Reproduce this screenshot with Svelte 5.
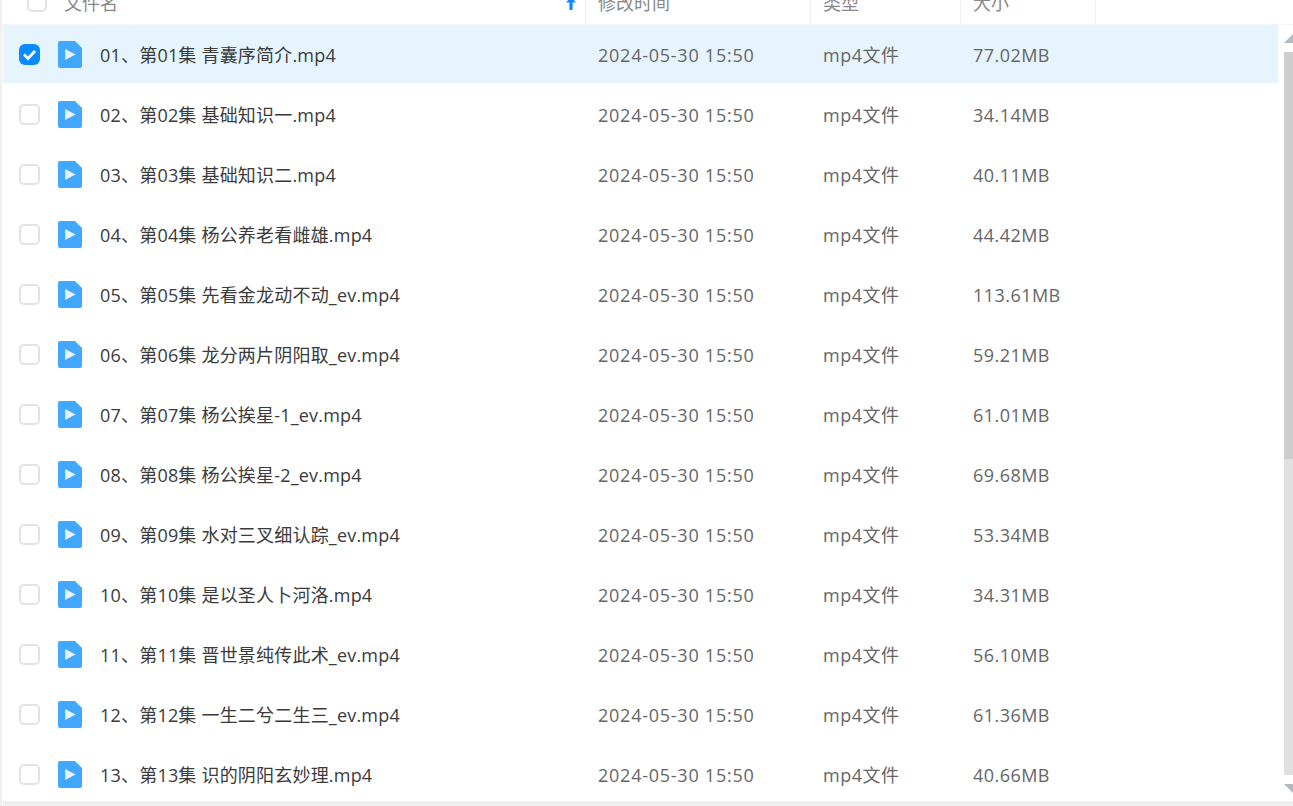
<script>
	const files = [
		["01、第01集 青囊序简介.mp4", "77.02MB"],
		["02、第02集 基础知识一.mp4", "34.14MB"],
		["03、第03集 基础知识二.mp4", "40.11MB"],
		["04、第04集 杨公养老看雌雄.mp4", "44.42MB"],
		["05、第05集 先看金龙动不动_ev.mp4", "113.61MB"],
		["06、第06集 龙分两片阴阳取_ev.mp4", "59.21MB"],
		["07、第07集 杨公挨星-1_ev.mp4", "61.01MB"],
		["08、第08集 杨公挨星-2_ev.mp4", "69.68MB"],
		["09、第09集 水对三叉细认踪_ev.mp4", "53.34MB"],
		["10、第10集 是以圣人卜河洛.mp4", "34.31MB"],
		["11、第11集 晋世景纯传此术_ev.mp4", "56.10MB"],
		["12、第12集 一生二兮二生三_ev.mp4", "61.36MB"],
		["13、第13集 识的阴阳玄妙理.mp4", "40.66MB"],
	];
</script>

<div class="page">
	<div class="header">
		<div class="col-check"><span class="box"></span></div>
		<div class="col-name head-cell">
			<span>文件名</span>
			<svg class="sort" width="12" height="10" viewBox="0 0 12 10">
				<path d="M6 -3L11 2.5H7.6V10H4.4V2.5H1Z" fill="#0a8cff" />
			</svg>
		</div>
		<div class="col-date head-cell">修改时间</div>
		<div class="col-type head-cell">类型</div>
		<div class="col-size head-cell">大小</div>
	</div>

	<div class="body">
		<div class="list">
			{#each files as file, i (i)}
				<div class="row" class:selected={i === 0}>
					<div class="col-check">
						{#if i === 0}
							<span class="box checked">
								<svg width="21" height="21" viewBox="0 0 21 21">
									<path d="M5 10.6L9 14.4L16 7" fill="none" stroke="#fff" stroke-width="2.8" />
								</svg>
							</span>
						{:else}
							<span class="box"></span>
						{/if}
					</div>
					<svg class="file-icon" width="24" height="27" viewBox="0 0 24 27">
						<path d="M2 0H17L24 7V25Q24 27 22 27H2Q0 27 0 25V2Q0 0 2 0Z" fill="#42a8ff" />
						<path d="M7.2 8L17.5 13.5L7.2 19Z" fill="#e6f3ff" />
					</svg>
					<div class="name">{file[0]}</div>
					<div class="col-date">2024-05-30 15:50</div>
					<div class="col-type">mp4文件</div>
					<div class="col-size">{file[1]}</div>
				</div>
			{/each}
		</div>

		<div class="scrollbar">
			<span class="arrow up"></span>
			<div class="track">
				<div class="thumb"></div>
			</div>
			<span class="arrow down"></span>
		</div>
	</div>
	<div class="footer"></div>
</div>

<style>
	:global(body) {
		margin: 0;
		background: #fff;
	}

	.page {
		width: 1293px;
		height: 806px;
		overflow: hidden;
		box-sizing: border-box;
		border-left: 2px solid #f0f0f0;
		padding-left: 1px;
		display: flex;
		flex-direction: column;
		font-family: "Open Sans", "Noto Sans CJK SC", sans-serif;
		font-size: 18px;
		color: #424e67;
	}

	.header {
		height: 24px;
		flex: none;
		display: flex;
		align-items: flex-end;
		overflow: hidden;
		color: #888;
	}

	.head-cell {
		box-sizing: border-box;
		flex: none;
		height: 30px;
		line-height: 18px;
		padding-left: 12px;
		border-right: 1px solid #f0f0f0;
		overflow: hidden;
	}

	.header .col-check {
		padding-left: 24px;
		padding-bottom: 12px;
	}

	.header .box {
		width: 20px;
	}

	.header .col-name {
		width: 528px;
		position: relative;
		padding-left: 6px;
	}

	.header .col-date {
		width: 225px;
	}

	.header .col-type {
		width: 150px;
	}

	.header .col-size {
		width: 135px;
	}

	.sort {
		position: absolute;
		right: 8px;
		top: 6px;
	}

	.body {
		flex: 1;
		display: flex;
		min-height: 0;
		border-top: 1px solid #f2f4f8;
	}

	.list {
		width: 1275px;
		flex: none;
	}

	.row {
		height: 60px;
		display: flex;
		align-items: center;
		box-sizing: border-box;
		padding-bottom: 1px;
		line-height: 24px;
	}

	.row.selected {
		height: 58px;
		margin-bottom: 2px;
		padding: 1px 0 0;
		background: #e6f4fd;
	}

	.col-check {
		width: 55px;
		flex: none;
		display: flex;
		padding-left: 16px;
		box-sizing: border-box;
	}

	.box {
		display: block;
		flex: none;
		box-sizing: border-box;
		width: 21px;
		height: 21px;
		border: 2px solid #e2e2e2;
		border-radius: 5px;
		background: #fff;
	}

	.box.checked {
		border: 0;
		background: #0a8cff;
		border-radius: 6px;
	}

	.box svg {
		display: block;
	}

	.file-icon {
		flex: none;
	}

	.name {
		width: 498px;
		margin-left: 18px;
		flex: none;
		color: #3b3b3b;
		letter-spacing: 0.2px;
	}

	.row .col-date {
		width: 225px;
		flex: none;
		color: #666;
		letter-spacing: 0.75px;
	}

	.row .col-type {
		width: 150px;
		flex: none;
		color: #666;
		letter-spacing: 0.5px;
	}

	.row .col-size {
		flex: none;
		color: #666;
		letter-spacing: 0.45px;
	}

	.scrollbar {
		margin-left: auto;
		width: 9px;
		display: flex;
		flex-direction: column;
		padding: 9px 0 8px;
	}

	.track {
		flex: 1;
		margin: 9px 0;
		background: #e0e0e0;
	}

	.thumb {
		height: 407px;
		background: #cdcdcd;
	}

	.arrow {
		display: block;
		flex: none;
		width: 0;
		height: 0;
		border-left: 9px solid transparent;
	}

	.arrow.up {
		border-bottom: 9px solid #b4b9bd;
	}

	.arrow.down {
		border-top: 9px solid #b4b9bd;
	}

	.footer {
		height: 5px;
		flex: none;
		background: #f0f0f0;
	}
</style>
